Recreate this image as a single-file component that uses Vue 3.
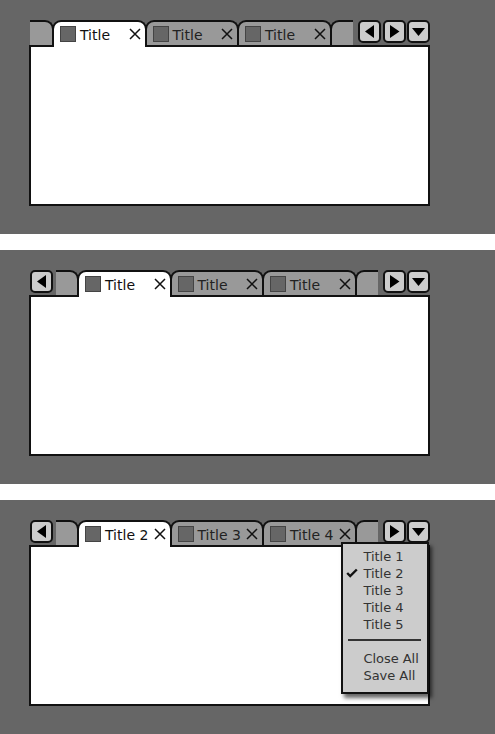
<script setup>
const panels = [
  { lead: false, titles: ['Title', 'Title', 'Title'], menu: false },
  { lead: true, titles: ['Title', 'Title', 'Title'], menu: false },
  { lead: true, titles: ['Title 2', 'Title 3', 'Title 4'], menu: true },
]
const items = ['Title 1', 'Title 2', 'Title 3', 'Title 4', 'Title 5']
</script>

<template>
  <div class="page">
    <section v-for="(p, i) in panels" :key="i" class="panel">
      <div class="frame">
        <div class="strip">
          <button v-if="p.lead" class="btn lead">
            <svg width="23" height="23" viewBox="0 0 23 23"><path d="M16 5v13L7 11.5z" /></svg>
          </button>
          <div class="tabs" :class="{ shifted: p.lead }">
            <div class="tab stub left"></div>
            <div v-for="(t, j) in p.titles" :key="j" class="tab" :class="{ active: j === 0 }">
              <span class="ico"></span>
              <span class="label">{{ t }}</span>
              <svg class="x" width="12" height="12" viewBox="0 0 12 12"><path d="M1 1l10 10M11 1L1 11" /></svg>
            </div>
            <div class="tab stub right"></div>
          </div>
          <div class="btns">
            <button v-if="!p.lead" class="btn">
              <svg width="23" height="23" viewBox="0 0 23 23"><path d="M16 5v13L7 11.5z" /></svg>
            </button>
            <button class="btn">
              <svg width="23" height="23" viewBox="0 0 23 23"><path d="M7 5v13l9.5-6.5z" /></svg>
            </button>
            <button class="btn">
              <svg width="23" height="23" viewBox="0 0 23 23"><path d="M5 8h13l-6.5 8z" /></svg>
            </button>
          </div>
        </div>
        <div class="content"></div>
        <div v-if="p.menu" class="menu">
          <div v-for="(m, k) in items" :key="k" class="item">
            <svg v-if="k === 1" class="check" width="12" height="10" viewBox="0 0 12 10"><path d="M1.2 5l3 3L10.8 1.5" /></svg>
            {{ m }}
          </div>
          <div class="sep"></div>
          <div class="item">Close All</div>
          <div class="item">Save All</div>
        </div>
      </div>
    </section>
  </div>
</template>

<style scoped>
.page {
  display: flex;
  flex-direction: column;
  gap: 16px;
  width: 495px;
  height: 734px;
  background: #fff;
  font-family: "DejaVu Sans", sans-serif;
}
.panel {
  height: 234px;
  background: #666;
  padding: 20px 0 0 30px;
  box-sizing: border-box;
}
.frame {
  position: relative;
  width: 400px;
}
.strip {
  display: flex;
  height: 25px;
  position: relative;
  z-index: 1;
}
.tabs {
  display: flex;
  flex: none;
}
.tabs.shifted {
  margin-left: 3px;
}
.tab {
  box-sizing: border-box;
  width: 94.5px;
  height: 25px;
  flex: none;
  background: #999;
  border: 2px solid #111;
  border-bottom: 0;
  border-radius: 9px 9px 0 0;
  margin-left: -2px;
  display: flex;
  align-items: flex-start;
  padding: 4px 0 0 6px;
  color: #222;
  font-size: 14px;
}
.tab.active {
  position: relative;
  z-index: 1;
  background: #fff;
  height: 27px;
  color: #111;
}
.stub.left {
  width: 24px;
  margin-left: 0;
  border-left: 0;
  border-radius: 0 9px 0 0;
}
.shifted .stub.left {
  width: 23px;
}
.stub.right {
  width: 23px;
  border-right: 0;
  border-radius: 9px 0 0 0;
}
.ico {
  box-sizing: border-box;
  width: 16px;
  height: 16px;
  flex: none;
  background: #666;
  border: 1px solid #444;
  margin-right: 4px;
}
.label {
  flex: 1;
  white-space: nowrap;
  line-height: 16px;
  margin-top: 1px;
}
.x {
  flex: none;
  margin: 2px 4px 0 0;
  fill: none;
  stroke: #111;
  stroke-width: 1.5;
}
.btns {
  display: flex;
  gap: 1.5px;
  margin-left: auto;
}
.btn {
  box-sizing: border-box;
  width: 23px;
  height: 23px;
  flex: none;
  padding: 0;
  background: #ccc;
  border: 2px solid #111;
  border-radius: 5px;
  display: flex;
  align-items: center;
  justify-content: center;
}
.btn svg {
  flex: none;
  margin: -2px;
  fill: #000;
}
.content {
  box-sizing: border-box;
  width: 401px;
  height: 161px;
  margin-left: -1px;
  background: #fff;
  border: 2px solid #111;
}
.menu {
  position: absolute;
  z-index: 2;
  top: 22px;
  left: 310.5px;
  box-sizing: border-box;
  width: 88.5px;
  height: 152px;
  background: #ccc;
  border: 2px solid #111;
  padding: 4px 0 0 21px;
  box-shadow: 3px 4px 4px rgba(0, 0, 0, .6);
  font-size: 13px;
  letter-spacing: -0.05px;
  color: #333;
}
.item {
  position: relative;
  height: 17px;
  line-height: 17px;
  white-space: nowrap;
}
.check {
  position: absolute;
  left: -18px;
  top: 3px;
  fill: none;
  stroke: #111;
  stroke-width: 2.4;
}
.sep {
  width: 73px;
  height: 2px;
  margin: 6px 0 9px -16px;
  background: #333;
}
</style>

<style>
html, body { margin: 0; background: #fff; }
</style>
